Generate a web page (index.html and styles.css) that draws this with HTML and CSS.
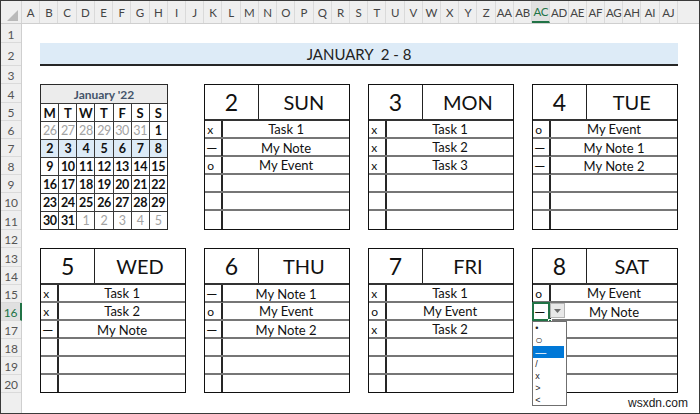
FILE: index.html
```html
<!DOCTYPE html>
<html>
<head>
<meta charset="utf-8">
<link rel="stylesheet" href="styles.css">
</head>
<body>
<div class="sheet">
  <div class="colhdr">
    <div class="corner"><svg width="20" height="22" viewBox="0 0 20 22"><polygon points="17,9 17,20 6,20" fill="#b9b9b9"/></svg></div>
    <div class="ch">A</div><div class="ch">B</div><div class="ch">C</div><div class="ch">D</div><div class="ch">E</div><div class="ch">F</div><div class="ch">G</div><div class="ch">H</div><div class="ch">I</div><div class="ch">J</div><div class="ch">K</div><div class="ch">L</div><div class="ch">M</div><div class="ch">N</div><div class="ch">O</div><div class="ch">P</div><div class="ch">Q</div><div class="ch">R</div><div class="ch">S</div><div class="ch">T</div><div class="ch">U</div><div class="ch">V</div><div class="ch">W</div><div class="ch">X</div><div class="ch">Y</div><div class="ch">Z</div><div class="ch">AA</div><div class="ch">AB</div><div class="ch sel">AC</div><div class="ch">AD</div><div class="ch">AE</div><div class="ch">AF</div><div class="ch">AG</div><div class="ch">AH</div><div class="ch">AI</div><div class="ch">AJ</div>
    <div class="chfill"></div>
  </div>
  <div class="body">
    <div class="rowhdr">
      <div class="rn h19">1</div>
      <div class="rn h23">2</div>
      <div class="rn h18">3</div>
      <div class="rn h19">4</div>
      <div class="rn h18">5</div>
      <div class="rn h18">6</div>
      <div class="rn h18">7</div>
      <div class="rn h18">8</div>
      <div class="rn h18">9</div>
      <div class="rn h18">10</div>
      <div class="rn h19">11</div>
      <div class="rn h18">12</div>
      <div class="rn h19">13</div>
      <div class="rn h18">14</div>
      <div class="rn h18">15</div>
      <div class="rn h18 rsel">16</div>
      <div class="rn h18">17</div>
      <div class="rn h18">18</div>
      <div class="rn h18">19</div>
      <div class="rn h18">20</div>
      <div class="rnfill"></div>
    </div>
    <div class="canvas">
      <div class="title">JANUARY&nbsp; 2 - 8</div>

      <div class="cal">
        <div class="cc chead">January '22</div>
        <div class="cc wd">M</div><div class="cc wd">T</div><div class="cc wd">W</div><div class="cc wd">T</div><div class="cc wd">F</div><div class="cc wd">S</div><div class="cc wd">S</div>
        <div class="cc g">26</div><div class="cc g">27</div><div class="cc g">28</div><div class="cc g">29</div><div class="cc g">30</div><div class="cc g">31</div><div class="cc">1</div>
        <div class="cc b">2</div><div class="cc b">3</div><div class="cc b">4</div><div class="cc b">5</div><div class="cc b">6</div><div class="cc b">7</div><div class="cc b">8</div>
        <div class="cc">9</div><div class="cc">10</div><div class="cc">11</div><div class="cc">12</div><div class="cc">13</div><div class="cc">14</div><div class="cc">15</div>
        <div class="cc">16</div><div class="cc">17</div><div class="cc">18</div><div class="cc">19</div><div class="cc">20</div><div class="cc">21</div><div class="cc">22</div>
        <div class="cc">23</div><div class="cc">24</div><div class="cc">25</div><div class="cc">26</div><div class="cc">27</div><div class="cc">28</div><div class="cc">29</div>
        <div class="cc">30</div><div class="cc">31</div><div class="cc g">1</div><div class="cc g">2</div><div class="cc g">3</div><div class="cc g">4</div><div class="cc g">5</div>
      </div>

      <div class="day d-sun">
        <div class="dhead"><div class="dnum">2</div><div class="dname">SUN</div></div>
        <div class="entry"><div class="mk">x</div><div class="tx">Task 1</div></div>
        <div class="entry"><div class="mk dash">—</div><div class="tx">My Note</div></div>
        <div class="entry"><div class="mk">o</div><div class="tx">My Event</div></div>
        <div class="entry"><div class="mk"></div><div class="tx"></div></div>
        <div class="entry"><div class="mk"></div><div class="tx"></div></div>
        <div class="entry"><div class="mk"></div><div class="tx"></div></div>
      </div>

      <div class="day d-mon">
        <div class="dhead"><div class="dnum">3</div><div class="dname">MON</div></div>
        <div class="entry"><div class="mk">x</div><div class="tx">Task 1</div></div>
        <div class="entry"><div class="mk">x</div><div class="tx">Task 2</div></div>
        <div class="entry"><div class="mk">x</div><div class="tx">Task 3</div></div>
        <div class="entry"><div class="mk"></div><div class="tx"></div></div>
        <div class="entry"><div class="mk"></div><div class="tx"></div></div>
        <div class="entry"><div class="mk"></div><div class="tx"></div></div>
      </div>

      <div class="day d-tue">
        <div class="dhead"><div class="dnum">4</div><div class="dname">TUE</div></div>
        <div class="entry"><div class="mk">o</div><div class="tx">My Event</div></div>
        <div class="entry"><div class="mk dash">—</div><div class="tx">My Note 1</div></div>
        <div class="entry"><div class="mk dash">—</div><div class="tx">My Note 2</div></div>
        <div class="entry"><div class="mk"></div><div class="tx"></div></div>
        <div class="entry"><div class="mk"></div><div class="tx"></div></div>
        <div class="entry"><div class="mk"></div><div class="tx"></div></div>
      </div>

      <div class="day d-wed">
        <div class="dhead"><div class="dnum">5</div><div class="dname">WED</div></div>
        <div class="entry"><div class="mk">x</div><div class="tx">Task 1</div></div>
        <div class="entry"><div class="mk">x</div><div class="tx">Task 2</div></div>
        <div class="entry"><div class="mk dash">—</div><div class="tx">My Note</div></div>
        <div class="entry"><div class="mk"></div><div class="tx"></div></div>
        <div class="entry"><div class="mk"></div><div class="tx"></div></div>
        <div class="entry"><div class="mk"></div><div class="tx"></div></div>
      </div>

      <div class="day d-thu">
        <div class="dhead"><div class="dnum">6</div><div class="dname">THU</div></div>
        <div class="entry"><div class="mk dash">—</div><div class="tx">My Note 1</div></div>
        <div class="entry"><div class="mk">o</div><div class="tx">My Event</div></div>
        <div class="entry"><div class="mk dash">—</div><div class="tx">My Note 2</div></div>
        <div class="entry"><div class="mk"></div><div class="tx"></div></div>
        <div class="entry"><div class="mk"></div><div class="tx"></div></div>
        <div class="entry"><div class="mk"></div><div class="tx"></div></div>
      </div>

      <div class="day d-fri">
        <div class="dhead"><div class="dnum">7</div><div class="dname">FRI</div></div>
        <div class="entry"><div class="mk">x</div><div class="tx">Task 1</div></div>
        <div class="entry"><div class="mk">o</div><div class="tx">My Event</div></div>
        <div class="entry"><div class="mk">x</div><div class="tx">Task 2</div></div>
        <div class="entry"><div class="mk"></div><div class="tx"></div></div>
        <div class="entry"><div class="mk"></div><div class="tx"></div></div>
        <div class="entry"><div class="mk"></div><div class="tx"></div></div>
      </div>

      <div class="day d-sat">
        <div class="dhead"><div class="dnum">8</div><div class="dname">SAT</div></div>
        <div class="entry"><div class="mk">o</div><div class="tx">My Event</div></div>
        <div class="entry"><div class="mk dash active">—
          <span class="selbox"></span><span class="selhandle"></span>
          <span class="ddbtn"><svg width="7" height="4" viewBox="0 0 7 4"><polygon points="0,0 7,0 3.5,4" fill="#6d6d6d"/></svg></span>
          <div class="ddlist">
            <div class="dditem">•</div>
            <div class="dditem big">○</div>
            <div class="dditem hl">—</div>
            <div class="dditem">/</div>
            <div class="dditem">x</div>
            <div class="dditem">&gt;</div>
            <div class="dditem">&lt;</div>
          </div>
        </div><div class="tx">My Note</div></div>
        <div class="entry"><div class="mk"></div><div class="tx"></div></div>
        <div class="entry"><div class="mk"></div><div class="tx"></div></div>
        <div class="entry"><div class="mk"></div><div class="tx"></div></div>
        <div class="entry"><div class="mk"></div><div class="tx"></div></div>
      </div>
    </div>
  </div>
  <div class="watermark">wsxdn.com</div>
</div>
</body>
</html>
```
FILE: styles.css
```css
* { box-sizing: border-box; }
html, body { margin: 0; padding: 0; background: #fff; }
.sheet {
  width: 700px; height: 414px;
  border: 1px solid #3a3a3a;
  position: relative; overflow: hidden;
  display: flex; flex-direction: column;
  font-family: Lato, "Liberation Sans", sans-serif;
  color: #111;
  background: #fff;
}
.colhdr {
  height: 23px; flex: none;
  display: flex;
  background: #efefef;
  border-bottom: 1px solid #cfcfcf;
}
.corner {
  width: 21px; flex: none;
  border-right: 1px solid #d4d4d4;
  display: flex; align-items: flex-end; justify-content: flex-end;
}
.corner svg { display: block; }
.ch {
  width: 18.22px; flex: none;
  border-right: 1px solid #dadada;
  font-size: 11.5px; color: #444;
  display: flex; align-items: center; justify-content: center;
  letter-spacing: -0.3px;
  padding-top: 1px;
}
.ch.sel {
  background: #e0e0e0;
  color: #217346;
  border-bottom: 2px solid #217346;
}
.chfill { flex: 1; }
.body { flex: 1; display: flex; min-height: 0; }
.rowhdr {
  width: 21px; flex: none;
  background: #efefef;
  border-right: 1px solid #cfcfcf;
  display: flex; flex-direction: column;
}
.rn {
  flex: none;
  border-bottom: 1px solid #dadada;
  font-size: 12px; color: #555;
  display: flex; align-items: center; justify-content: center;
  padding-top: 2px;
  letter-spacing: -0.2px;
}
.rn.rsel { color: #217346; background: #e0e0e0; border-right: 2px solid #217346; margin-right: -1px; }
.h18 { height: 18px; }
.h19 { height: 19px; }
.h23 { height: 23px; }
.rnfill { flex: 1; }

.canvas {
  flex: 1;
  display: grid;
  grid-template-columns: repeat(36, 18.22px) 1fr;
  grid-template-rows: 19px 23px 18px 19px repeat(6, 18px) 19px 18px 19px repeat(7, 18px) 1fr;
}
.title {
  grid-column: 2 / 37; grid-row: 2;
  background: #ddebf7;
  border-bottom: 2px solid #262626;
  display: flex; align-items: center; justify-content: center;
  font-size: 15px; color: #222;
  padding-top: 1px;
}

.cal {
  grid-column: 2 / 9; grid-row: 4 / 12;
  display: grid;
  grid-template-columns: repeat(7, 1fr);
  grid-template-rows: 18px repeat(6, 17px) 1fr;
  gap: 1px;
  background: #3a3a3a;
  border: 1px solid #2a2a2a;
}
.cc {
  background: #fff;
  display: flex; align-items: center; justify-content: center;
  font-size: 12.5px; font-weight: 700; color: #111;
  letter-spacing: -0.4px;
}
.cc.wd { font-size: 13px; letter-spacing: 0; }
.cc.chead { grid-column: 1 / 8; background: #ececec; color: #44546a; letter-spacing: 0; font-size: 12px; }
.cc.g { color: #a3a3a3; font-weight: 400; }
.cc.b { background: #ddebf7; }

.day {
  display: grid;
  grid-template-rows: 36px repeat(5, 18px) 1fr;
  border: 1px solid #111;
}
.d-sun { grid-column: 11 / 19; grid-row: 4 / 12; }
.d-mon { grid-column: 20 / 28; grid-row: 4 / 12; }
.d-tue { grid-column: 29 / 37; grid-row: 4 / 12; }
.d-wed { grid-column: 2 / 10; grid-row: 13 / 21; }
.d-thu { grid-column: 11 / 19; grid-row: 13 / 21; }
.d-fri { grid-column: 20 / 28; grid-row: 13 / 21; }
.d-sat { grid-column: 29 / 37; grid-row: 13 / 21; }

.dhead {
  display: grid;
  grid-template-columns: 53.7px 1fr;
  border-bottom: 2px solid #333;
}
.dnum {
  border-right: 1px solid #222;
  display: flex; align-items: center; justify-content: center;
  font-size: 23px; color: #111;
}
.dname {
  display: flex; align-items: center; justify-content: center;
  font-size: 20px; color: #111;
}
.entry {
  display: grid;
  grid-template-columns: 18px 1fr;
  border-bottom: 2px solid #767676;
}
.entry:last-child { border-bottom: none; }
.mk {
  border-right: 2px solid #262626;
  font-size: 12px; color: #111;
  display: flex; align-items: center;
  padding-left: 2px;
}
.mk.dash { font-size: 14px; padding-left: 1px; }
.tx {
  font-size: 13px; color: #111;
  display: flex; align-items: center; justify-content: center;
}

.mk.active { position: relative; }
.selbox {
  position: absolute; left: -1px; top: -1px; right: -1px; bottom: -1px;
  border: 2px solid #217346;
  z-index: 4;
}
.selhandle {
  position: absolute; right: -3px; bottom: -3px;
  width: 4px; height: 4px;
  background: #217346; border: 1px solid #fff;
  z-index: 5;
}
.ddbtn {
  position: absolute; left: calc(100% + 1px); top: 0;
  width: 15px; height: 15px;
  background: #e8e8e8;
  border: 1px solid #b4b4b4;
  display: flex; align-items: center; justify-content: center;
  z-index: 5;
}
.ddbtn svg { display: block; }
.ddlist {
  position: absolute; left: -1px; top: calc(100% + 1px);
  width: 35px; height: 85px;
  background: #fff;
  border: 1px solid #6f6f6f;
  padding: 0 2px 0 0;
  z-index: 6;
}
.dditem {
  height: 12px; line-height: 12px;
  font-family: "Liberation Sans", Arial, sans-serif;
  font-size: 9px; color: #222;
  padding-left: 2px;
}
.dditem.big { font-size: 12px; line-height: 12px; }
.dditem.hl { background: #0078d7; color: #fff; font-size: 11px; }

.watermark {
  position: absolute; right: 11px; bottom: 3px;
  font-family: "Liberation Sans", Arial, sans-serif;
  font-size: 12px; line-height: 14px; color: #1a1a1a;
}
```
